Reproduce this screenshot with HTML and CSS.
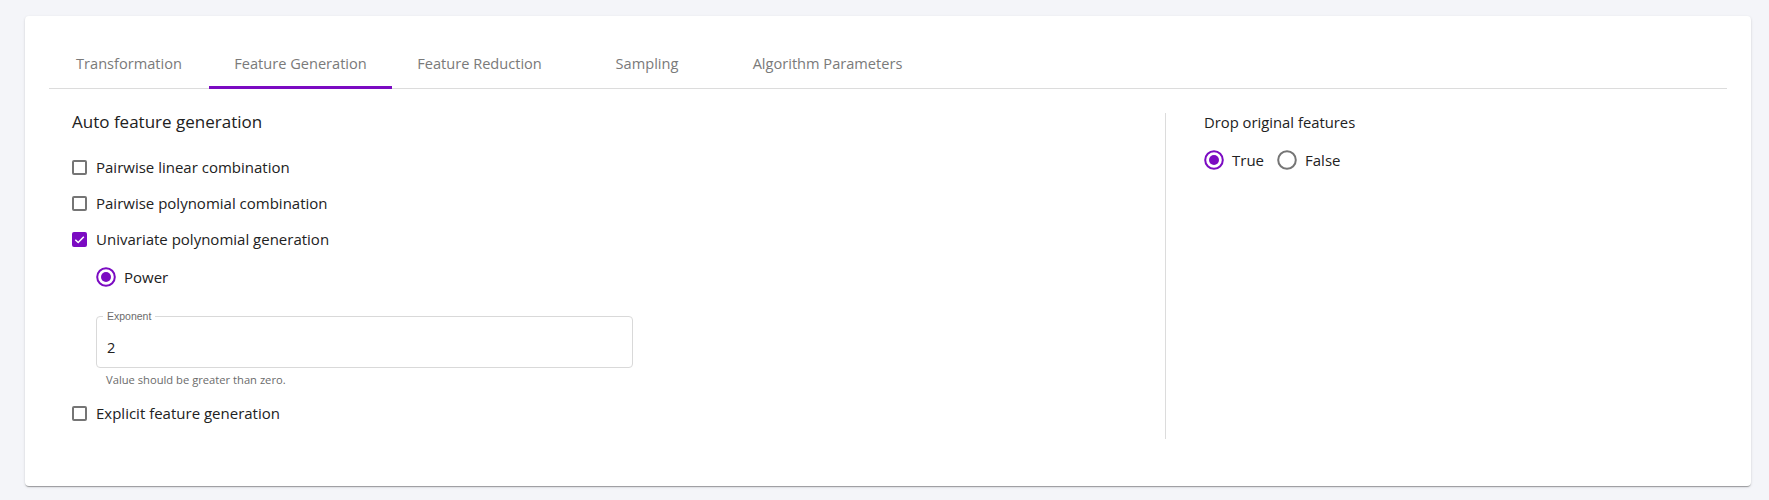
FILE: index.html
```html
<!DOCTYPE html>
<html>
<head>
<meta charset="utf-8">
<link rel="stylesheet" href="styles.css">
</head>
<body>
<div class="card">
  <div class="tabs">
    <div class="tab t1">Transformation</div>
    <div class="tab t2 active">Feature Generation</div>
    <div class="tab t3">Feature Reduction</div>
    <div class="tab t4">Sampling</div>
    <div class="tab t5">Algorithm Parameters</div>
  </div>
  <div class="content">
    <div class="col-left">
      <div class="heading">Auto feature generation</div>
      <label class="check-row"><span class="cbox"></span><span>Pairwise linear combination</span></label>
      <label class="check-row"><span class="cbox"></span><span>Pairwise polynomial combination</span></label>
      <label class="check-row"><span class="cbox checked"><svg viewBox="0 0 16 16" width="15" height="15"><path d="M3.5 8.2 L6.6 11.2 L12.6 5" fill="none" stroke="#fff" stroke-width="1.6"/></svg></span><span>Univariate polynomial generation</span></label>
      <div class="sub">
        <label class="radio-row power"><svg class="radio" viewBox="0 0 20 20" width="20" height="20"><circle cx="10" cy="10" r="8.8" fill="none" stroke="#7b0bc2" stroke-width="2"/><circle cx="10" cy="10" r="5" fill="#7b0bc2"/></svg><span>Power</span></label>
        <div class="field">
          <div class="field-box">
            <span class="field-label">Exponent</span>
            <span class="field-value">2</span>
          </div>
          <div class="helper">Value should be greater than zero.</div>
        </div>
      </div>
      <label class="check-row"><span class="cbox"></span><span>Explicit feature generation</span></label>
    </div>
    <div class="col-right">
      <div class="subheading">Drop original features</div>
      <div class="radio-group">
        <label class="radio-row"><svg class="radio" viewBox="0 0 20 20" width="20" height="20"><circle cx="10" cy="10" r="8.8" fill="none" stroke="#7b0bc2" stroke-width="2"/><circle cx="10" cy="10" r="5" fill="#7b0bc2"/></svg><span>True</span></label>
        <label class="radio-row"><svg class="radio" viewBox="0 0 20 20" width="20" height="20"><circle cx="10" cy="10" r="8.8" fill="none" stroke="#757575" stroke-width="2"/></svg><span>False</span></label>
      </div>
    </div>
  </div>
</div>
</body>
</html>
```

FILE: styles.css
```css
* { box-sizing: border-box; }
html, body { margin: 0; padding: 0; }
body {
  background: #f4f5f9;
  font-family: "Open Sans", "DejaVu Sans", sans-serif;
  color: #212121;
  width: 1769px;
  height: 500px;
  overflow: hidden;
}
.card {
  margin: 16px 18px 0 25px;
  height: 470px;
  background: #fff;
  border-radius: 4px;
  box-shadow: 0 2px 1px -1px rgba(0,0,0,0.2), 0 1px 1px 0 rgba(0,0,0,0.14), 0 1px 3px 0 rgba(0,0,0,0.12);
  padding: 24px 24px 0 24px;
}
.tabs {
  display: flex;
  height: 49px;
  border-bottom: 1px solid #dcdcdc;
}
.tab {
  position: relative;
  display: flex;
  align-items: center;
  justify-content: center;
  white-space: nowrap;
  font-size: 14.6px;
  color: #7a7a7a;
  height: 48px;
  padding-bottom: 2px;
}
.t1 { width: 160px; }
.t2 { width: 183px; }
.t3 { width: 175px; }
.t4 { width: 160px; }
.t5 { width: 201px; }
.tab.active::after {
  content: "";
  position: absolute;
  left: 0; right: 0; bottom: -1px;
  height: 3px;
  background: #7b0bc2;
}
.content {
  display: grid;
  grid-template-columns: 1122px 1fr;
  margin-top: 24px;
  height: 326px;
  margin-left: -6px;
}
.col-left {
  padding-left: 29px;
  display: flex;
  flex-direction: column;
}
.col-right {
  border-left: 1px solid #dcdcdc;
  padding-left: 38px;
}
.heading {
  font-size: 17px;
  line-height: 24px;
  margin-top: -3px;
  color: #212121;
}
.check-row {
  display: flex;
  align-items: center;
  height: 36px;
  font-size: 15px;
  color: #222;
}
.heading + .check-row { margin-top: 15px; }
.cbox {
  width: 15px;
  height: 15px;
  border: 2px solid #757575;
  border-radius: 2px;
  margin-right: 9px;
  display: flex;
  align-items: center;
  justify-content: center;
  flex: none;
}
.cbox.checked {
  background: #7b0bc2;
  border-color: #7b0bc2;
}
.cbox.checked svg { flex: none; }
.sub {
  padding-left: 24px;
  display: flex;
  flex-direction: column;
}
.radio-row {
  display: flex;
  align-items: center;
  height: 36px;
  font-size: 15px;
  color: #222;
}
.radio { margin-right: 8px; flex: none; }
.power { margin-top: 2px; }
.field { margin-top: 21px; width: 537px; }
.field-box {
  position: relative;
  height: 52px;
  border: 1px solid #d9d9d9;
  border-radius: 4px;
  padding: 19px 10px 0 10px;
}
.field-label {
  position: absolute;
  top: -7px;
  left: 6px;
  padding: 0 4px;
  background: #fff;
  font-family: "Liberation Sans", Arial, sans-serif;
  font-size: 10.5px;
  line-height: 12px;
  color: #6b6b6b;
}
.field-value {
  font-size: 14.6px;
  line-height: 18px;
  color: #222;
}
.helper {
  font-size: 11.2px;
  color: #6b6b6b;
  margin-top: 5px;
  padding-left: 10px;
  line-height: 14px;
}
.sub + .check-row { margin-top: 8px; }
.subheading {
  font-size: 14.8px;
  line-height: 20px;
  color: #222;
  margin-top: -1px;
}
.radio-group {
  display: flex;
  gap: 13px;
  margin-top: 16px;
}
.radio-group .radio-row { height: 24px; }
```
